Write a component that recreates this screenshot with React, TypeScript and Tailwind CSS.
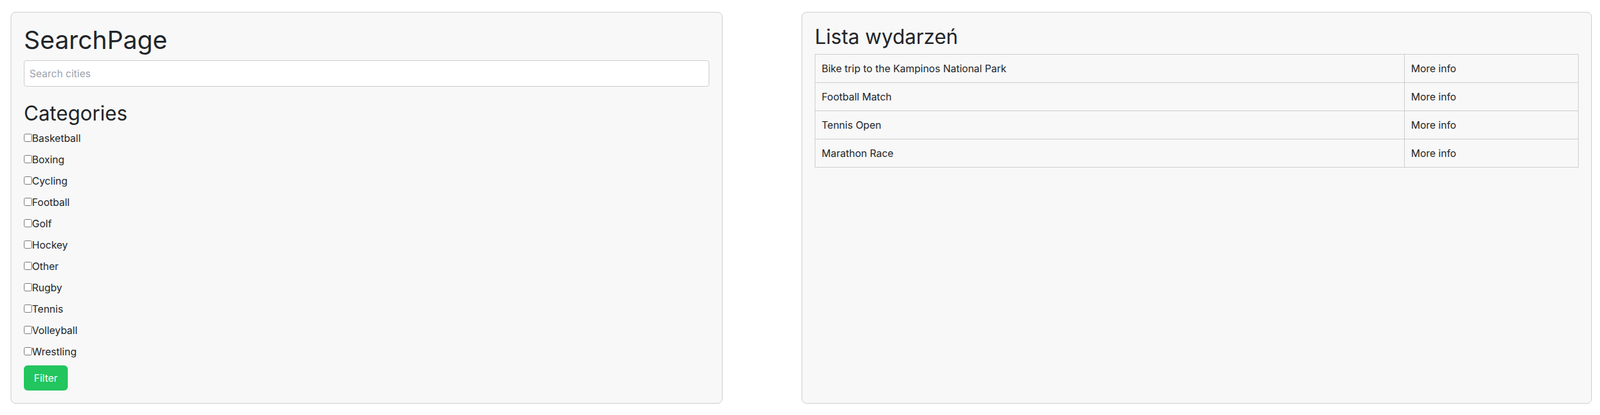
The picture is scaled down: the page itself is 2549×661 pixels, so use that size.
import React from "react";

const categories = [
  "Basketball",
  "Boxing",
  "Cycling",
  "Football",
  "Golf",
  "Hockey",
  "Other",
  "Rugby",
  "Tennis",
  "Volleyball",
  "Wrestling",
];

const events = [
  "Bike trip to the Kampinos National Park",
  "Football Match",
  "Tennis Open",
  "Marathon Race",
];

export default function App() {
  return (
    <div className="min-h-[661px] bg-white font-['Inter',sans-serif] text-[#212529]">
      <div className="flex items-stretch gap-[126px] pl-[17px] pt-[19px]">
        <div className="w-[1134px] rounded-lg border border-[#cccccc] bg-[#f8f8f8] p-5">
          <h1 className="mb-2 text-[40px] leading-[48px] font-normal">SearchPage</h1>
          <input
            type="text"
            placeholder="Search cities"
            className="mb-6 block w-full rounded border border-[#cccccc] bg-white p-2 text-base leading-6 placeholder:text-[#9ca3af] outline-none"
          />
          <h2 className="mb-2 text-[32px] leading-[38.4px] font-normal">Categories</h2>
          <div className="flex flex-col gap-[10px]">
            {categories.map((c) => (
              <label key={c} className="block text-base leading-6">
                <input type="checkbox" />
                {c}
              </label>
            ))}
          </div>
          <button className="mt-[10px] rounded-md bg-[#22c55e] px-4 py-2 text-base leading-6 text-white">
            Filter
          </button>
        </div>
        <div className="w-[1259px] rounded-lg border border-[#cccccc] bg-[#f8f8f8] p-5">
          <h2 className="mb-2 text-[32px] leading-[38.4px] font-normal">Lista wydarzeń</h2>
          <table className="w-full border-collapse">
            <tbody>
              {events.map((e) => (
                <tr key={e}>
                  <td className="border border-[#cccccc] p-[10px] text-left text-base leading-6">{e}</td>
                  <td className="border border-[#cccccc] p-[10px] text-left text-base leading-6">More info</td>
                </tr>
              ))}
            </tbody>
          </table>
        </div>
      </div>
    </div>
  );
}
